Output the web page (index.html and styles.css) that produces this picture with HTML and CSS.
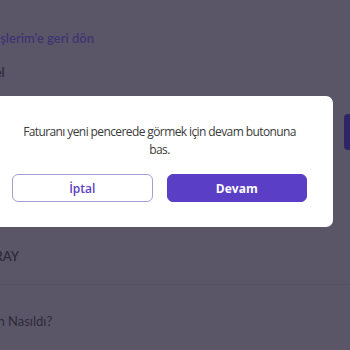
FILE: index.html
```html
<!DOCTYPE html>
<html lang="tr">
<head>
<meta charset="utf-8">
<link rel="stylesheet" href="styles.css">
</head>
<body>
<div class="page">
  <div class="back">Siparişlerim'e geri dön</div>
  <div class="label first">Sipariş Genel</div>
  <div class="spacer"></div>
  <div class="label second">GALATASARAY</div>
  <div class="rule"></div>
  <div class="label third">Siparişin Nasıldı?</div>
</div>
<div class="side-btn"></div>
<div class="overlay">
  <div class="modal">
    <p class="msg">Faturanı yeni pencerede görmek için devam butonuna bas.</p>
    <div class="actions">
      <button class="btn btn-outline">İptal</button>
      <button class="btn btn-primary">Devam</button>
    </div>
  </div>
</div>
</body>
</html>
```
FILE: styles.css
```css
html, body {
  margin: 0;
  padding: 0;
  width: 350px;
  height: 350px;
  overflow: hidden;
}
body {
  background: #5b5568;
  font-family: "Open Sans", "Noto Sans", sans-serif;
  position: relative;
}
.page {
  display: flex;
  flex-direction: column;
  padding: 30px 0 0 0;
  margin-left: -32px;
  font-family: Lato, "Open Sans", sans-serif;
  font-size: 13px;
}
.back {
  color: #3d3572;
  font-weight: 600;
  height: 18px;
}
.label {
  color: #2d2a38;
  font-weight: 600;
  margin-top: 16px;
  height: 18px;
}
.first { margin-left: -38px; }
.spacer { height: 166px; }
.second { margin-top: 0; margin-left: -38px; }
.rule {
  margin-top: 18px;
  height: 1px;
  background: #545062;
  width: 450px;
}
.third { margin-top: 28px; margin-left: -11px; font-weight: 400; }
.side-btn {
  position: absolute;
  right: -10px;
  top: 114px;
  width: 16px;
  height: 36px;
  border-radius: 4px;
  background: #2e2466;
}
.overlay {
  position: absolute;
  inset: 0;
}
.modal {
  position: absolute;
  top: 96px;
  left: -14px;
  width: 347px;
  height: 131px;
  box-sizing: border-box;
  background: #fff;
  border-radius: 7px;
  padding: 27px 26px 0 26px;
}
.msg {
  margin: 0;
  font-size: 12px;
  letter-spacing: -0.6px;
  line-height: 18px;
  color: #3a3a3a;
  text-align: center;
}
.actions {
  display: flex;
  gap: 14px;
  margin-top: 15px;
}
.btn {
  flex: 1;
  height: 28px;
  border-radius: 6px;
  font-family: "Open Sans", "Noto Sans", sans-serif;
  font-size: 12px;
  font-weight: 700;
  cursor: pointer;
}
.btn-outline {
  background: #fff;
  border: 1px solid #a59cd4;
  color: #5b3fc4;
  font-weight: 600;
}
.btn-primary {
  background: #5a3ec6;
  border: 1px solid #5a3ec6;
  color: #fff;
}
```
